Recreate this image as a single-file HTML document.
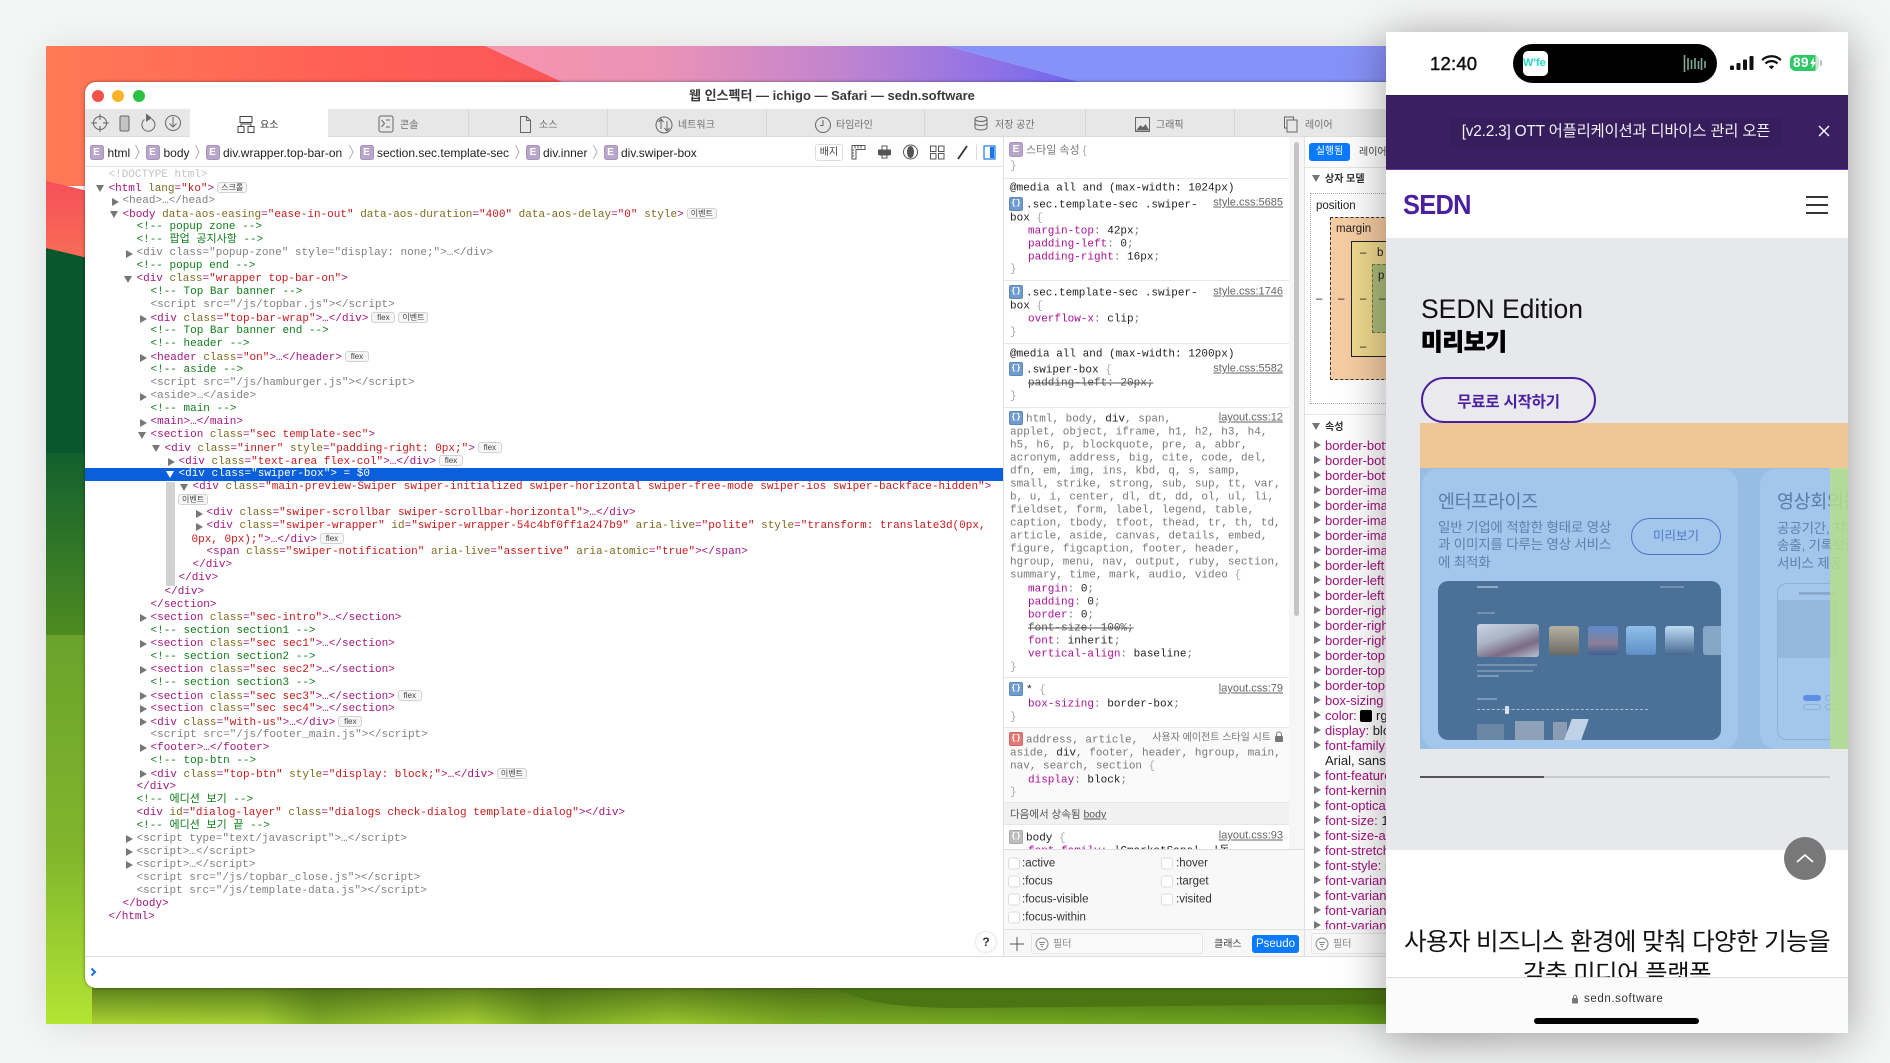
<!DOCTYPE html>
<html lang="ko"><head><meta charset="utf-8"><title>Web Inspector</title>
<style>
*{box-sizing:border-box}
html,body{margin:0;padding:0;width:1890px;height:1063px;overflow:hidden;background:#f4f5f5;font-family:"Liberation Sans","Noto Sans CJK KR",sans-serif}
.abs,.abs>*{position:absolute}
.page{left:0;top:0;width:1890px;height:1063px}
.win{position:absolute;left:85px;top:82px;width:1400px;height:906px;background:#fff;border-radius:11px;box-shadow:0 0 3px rgba(0,0,0,.45)}
.tabbar{position:absolute;left:85px;top:109px;width:1305px;height:28px;background:#e7e7e7;border-bottom:1px solid #dcdcdc}
.sep{position:absolute;top:109px;width:1px;height:28px;background:#d8d8d8}
.tt{position:absolute;top:119px;font-size:10px;line-height:13px;color:#6e6e6e;white-space:pre}
.crumb{position:absolute;top:147px;font-size:12px;line-height:13px;color:#222;white-space:pre}
.E{position:absolute;width:14px;height:15px;background:#b9a6cb;border:1px solid #a993bd;border-radius:2.5px;color:#fff;font:bold 10px/13px "Liberation Sans",sans-serif;text-align:center}
.hline{position:absolute;height:1px;background:#e6e6e6}
.dom{position:absolute;left:85px;top:169px;width:919px;font:11px/13.03px "Liberation Mono","Noto Sans CJK KR",monospace;color:#a3167f}
.dom>div{position:relative;white-space:pre;height:13.03px}
em{font-style:normal;color:#a3167f}
u{text-decoration:none;color:#7d6a1f}
s{text-decoration:none;color:#c8181a}
.c{color:#0f7d1a}.g,.g em,.g u,.g s{color:#808080}
.g s{color:#6f6f6f}
.i0{padding-left:23.5px}.i1{padding-left:37.5px}.i2{padding-left:51.5px}.i3{padding-left:65.5px}.i4{padding-left:79.5px}.i5{padding-left:93.5px}.i6{padding-left:107.5px}.i7{padding-left:121.5px}
.r::before,.d::before{content:"";position:absolute;width:0;height:0}
.r::before{margin:2.5px 0 0 -10.5px;border-left:7px solid #777;border-top:4px solid transparent;border-bottom:4px solid transparent}
.d::before{margin:3px 0 0 -12.5px;border-top:7px solid #777;border-left:4px solid transparent;border-right:4px solid transparent}
.sel{background:#0b5fdc;color:#fff}.sel.d::before{border-top-color:#fff}
.b{display:inline-block;margin-left:3px;height:11px;min-width:24px;padding:0 3px;border:1px solid #d2d2d2;border-radius:3px;background:#f6f6f6;color:#444;font:8px/9px "Liberation Sans","Noto Sans CJK KR",sans-serif;text-align:center;vertical-align:1px}
.s,.cs{white-space:pre;font:11px/13px "Liberation Mono","Noto Sans CJK KR",monospace;color:#777;transform:translateY(1.5px)}
.s{left:1010px}
.n{color:#aa1094}.k{color:#222}.x{text-decoration:line-through;color:#555}.x .n{color:#555}
.ri{left:1009px;width:14px;height:14px;border-radius:2px;background:#6f9bcf;border:1px solid #5d88bb;color:#fff;font:bold 8px/12px "Liberation Mono",monospace;text-align:center}
.ln{right:607px;font:11px/13px "Liberation Sans",sans-serif;color:#666;text-decoration:underline;white-space:pre;transform:translateY(1.5px)}
.cp{left:1325px;font:13px/15px "Liberation Sans",sans-serif;color:#a1107f;white-space:pre}
.cp::before{content:"";position:absolute;left:-11px;top:2.5px;border-left:7px solid #777;border-top:4.5px solid transparent;border-bottom:4.5px solid transparent}
.cb{width:12px;height:12px;border:1px solid #ddd;border-radius:3px;background:#fff;transform:translateY(1.5px)}
.pl{font:11.5px/14px "Liberation Sans",sans-serif;color:#333;white-space:pre;transform:translateY(1.5px)}
.bm{font:11.5px/14px "Liberation Sans",sans-serif;color:#222;white-space:pre}
.ph{font-family:"Liberation Sans","Noto Sans CJK KR",sans-serif;white-space:pre}
</style></head><body>

<div class="abs page">
<div style="left:46px;top:46px;width:1454px;height:978px;box-shadow:0 2px 34px rgba(0,0,0,.10)"></div>
<svg width="1890" height="1063" viewBox="0 0 1890 1063" style="left:0;top:0">
<defs>
<linearGradient id="w1" x1="46" x2="600" y1="0" y2="0" gradientUnits="userSpaceOnUse"><stop offset="0" stop-color="#ff7a56"/><stop offset=".55" stop-color="#ff5f55"/><stop offset="1" stop-color="#fb5458"/></linearGradient>
<linearGradient id="w2" x1="485" x2="1080" y1="0" y2="0" gradientUnits="userSpaceOnUse"><stop offset="0" stop-color="#f796ae"/><stop offset=".3" stop-color="#ea92b6"/><stop offset=".6" stop-color="#c184cf"/><stop offset=".85" stop-color="#8f72e6"/><stop offset="1" stop-color="#6e68ee"/></linearGradient>
<linearGradient id="w3" x1="0" x2="0" y1="181" y2="259" gradientUnits="userSpaceOnUse"><stop offset="0" stop-color="#f6505a"/><stop offset="1" stop-color="#f96d55"/></linearGradient>
<linearGradient id="w4" x1="0" x2="0" y1="453" y2="640" gradientUnits="userSpaceOnUse"><stop offset="0" stop-color="#12602f"/><stop offset="1" stop-color="#4f8c20"/></linearGradient>
<linearGradient id="w5" x1="0" x2="0" y1="635" y2="1024" gradientUnits="userSpaceOnUse"><stop offset="0" stop-color="#6aa32c"/><stop offset=".55" stop-color="#80b52c"/><stop offset="1" stop-color="#b2e534"/></linearGradient>
<linearGradient id="w6" x1="92" x2="1500" y1="0" y2="0" gradientUnits="userSpaceOnUse"><stop offset="0" stop-color="#a8d232"/><stop offset=".12" stop-color="#a5cf33"/><stop offset=".16" stop-color="#80ad28"/><stop offset=".27" stop-color="#a6cf33"/><stop offset=".32" stop-color="#7aa825"/><stop offset=".41" stop-color="#9ac62e"/><stop offset=".5" stop-color="#7cab24"/><stop offset="1" stop-color="#639e1a"/></linearGradient>
<linearGradient id="w7" x1="0" x2="0" y1="988" y2="1024" gradientUnits="userSpaceOnUse"><stop offset="0" stop-color="#24420a" stop-opacity=".55"/><stop offset="1" stop-color="#24420a" stop-opacity="0"/></linearGradient>
</defs>
<rect x="46" y="46" width="560" height="140" fill="url(#w1)"/>
<polygon points="485,46 947,46 1080,82 562,82" fill="url(#w2)"/>
<polygon points="947,46 1500,46 1500,82 1080,82" fill="#8792f8"/>
<polygon points="46,181 92,192 92,262 46,248" fill="url(#w3)"/>
<polygon points="46,248 92,259 92,460 46,453" fill="#0a562d"/>
<rect x="46" y="453" width="46" height="184" fill="url(#w4)"/>
<rect x="46" y="635" width="46" height="389" fill="url(#w5)"/>
<rect x="92" y="985" width="1408" height="39" fill="url(#w6)"/>
<rect x="92" y="985" width="1408" height="39" fill="url(#w7)"/>
<path d="M830,985C860,1003 900,1008 960,1008L1500,1003V985Z" fill="#4a7512"/>
</svg>
</div>

<div class="win"></div>

<div class="abs page">
<div style="left:92px;top:90px;width:12px;height:12px;border-radius:50%;background:#f4504b"></div>
<div style="left:112px;top:90px;width:12px;height:12px;border-radius:50%;background:#fbb428"></div>
<div style="left:133px;top:90px;width:12px;height:12px;border-radius:50%;background:#29c13f"></div>
<div style="left:689px;top:88px;width:285px;text-align:center;font-size:13px;line-height:16px;font-weight:bold;color:#3a3a3a;white-space:pre">웹 인스펙터 — ichigo — Safari — sedn.software</div>
</div>

<div class="tabbar"></div>
<div style="position:absolute;left:190px;top:109px;width:138px;height:28px;background:#fff"></div>
<div class="sep" style="left:468px"></div><div class="sep" style="left:607px"></div><div class="sep" style="left:766px"></div><div class="sep" style="left:924px"></div><div class="sep" style="left:1085px"></div><div class="sep" style="left:1234px"></div>

<svg width="1890" height="170" viewBox="0 0 1890 170" style="position:absolute;left:0;top:0" fill="none" stroke="#666" stroke-width="1">
<circle cx="100" cy="123" r="6.5"/><path d="M100 114v6M100 126v6M91 123h6M103 123h6"/>
<rect x="120" y="116" width="9" height="15" rx="1.5" fill="#c4c4c4"/>
<path d="M151.5 119a6.5 6.5 0 1 1-7 .5"/><path d="M146.5 114.5l4.500 3.500-4.500 3z" fill="#666"/>
<circle cx="173" cy="123" r="7.5"/><path d="M173 117v10M169.500 123.500l3.500 3.500 3.500-3.500"/>
<g transform="translate(0 1)">
<g stroke="#444"><rect x="240" y="115.500" width="12" height="6"/><rect x="238" y="125.500" width="6" height="6"/><rect x="248" y="125.500" width="6" height="6"/><path d="M241 125v-2h10v2"/></g>
<rect x="379" y="115" width="14" height="16" rx="2"/><path d="M381.500 119l3 3.500-3 3.500M386 119h4M386 126h4"/>
<path d="M520.500 115.500h6l4 4v12h-10zM526.500 115.500v4h4"/>
<circle cx="664" cy="124" r="8"/><path d="M661 118v10M658.500 121l2.500-3 2.500 3M667 120v10M664.500 127l2.500 3 2.500-3"/>
<circle cx="823" cy="124" r="7.500"/><path d="M823 119v5.500h-3"/>
<g><ellipse cx="981" cy="118" rx="6" ry="2.500"/><path d="M975 118v4c0 1.500 2.700 2.500 6 2.500s6-1 6-2.500v-4M975 122.500v4c0 1.500 2.700 2.500 6 2.500s6-1 6-2.500v-4"/></g>
<rect x="1135.500" y="116.500" width="14" height="14"/><path d="M1137 129l3.500-4 2.500 2 2.500-3 3 5z" fill="#666"/>
<rect x="1284.500" y="116" width="9" height="11"/><rect x="1287" y="119" width="10" height="12" fill="#e7e7e7"/>
</g>
<g stroke="#555"><path d="M852 145.500h13v4h-9v9.500h-4zM855 145.500v3M858 145.500v3M861 145.500v3M852 150h2M852 153h2M852 156h2"/>
<rect x="880" y="150" width="9" height="5"/><path d="M882 150v-4h5v4M882 155v3h5v-3" /><rect x="878.500" y="150" width="12" height="4.500" fill="#555"/>
<circle cx="910.500" cy="152" r="7"/><ellipse cx="910.500" cy="152" rx="3" ry="5.500" fill="#555"/>
<rect x="930.500" y="146" width="5.500" height="5.500"/><rect x="938.500" y="146" width="5.500" height="5.500"/><rect x="930.500" y="153.500" width="5.500" height="5.500"/><rect x="938.500" y="153.500" width="5.500" height="5.500"/></g>
<path d="M958 159l9-13" stroke="#333" stroke-width="1.800"/>
<path d="M976.500 144v16" stroke="#ddd"/>
<rect x="984" y="146" width="11" height="13" stroke="#1a76e8" stroke-width="1.200"/><rect x="990" y="147" width="4" height="11" fill="#1a76e8" stroke="none"/>
<g stroke="#aaa" stroke-width=".9"><path d="M135.500 145l3.500 7-3.500 7M195.500 145l3.500 7-3.500 7M349.500 145l3.500 7-3.500 7M515.500 145l3.500 7-3.500 7M593.500 145l3.500 7-3.500 7"/></g>
</svg>

<div class="tt" style="left:260px;color:#333">요소</div>
<div class="tt" style="left:400px">콘솔</div>
<div class="tt" style="left:539px">소스</div>
<div class="tt" style="left:678px">네트워크</div>
<div class="tt" style="left:836px">타임라인</div>
<div class="tt" style="left:995px">저장 공간</div>
<div class="tt" style="left:1156px">그래픽</div>
<div class="tt" style="left:1305px">레이어</div>

<div class="E" style="left:89.500px;top:145px">E</div><div class="crumb" style="left:107.500px">html</div>
<div class="E" style="left:145.500px;top:145px">E</div><div class="crumb" style="left:163.500px">body</div>
<div class="E" style="left:205.500px;top:145px">E</div><div class="crumb" style="left:223px">div.wrapper.top-bar-on</div>
<div class="E" style="left:359.500px;top:145px">E</div><div class="crumb" style="left:377px">section.sec.template-sec</div>
<div class="E" style="left:526px;top:145px">E</div><div class="crumb" style="left:543px">div.inner</div>
<div class="E" style="left:603.500px;top:145px">E</div><div class="crumb" style="left:621px">div.swiper-box</div>
<div style="position:absolute;left:815px;top:144px;width:28px;height:17px;border:1px solid #ddd;border-radius:3px;font-size:10px;line-height:15px;text-align:center;color:#444;background:#fff">배지</div>
<div class="hline" style="left:85px;top:166px;width:919px;background:#e4e4e4"></div>

<div class="dom">
<div class="i0" style="color:#c4c4c4">&lt;!DOCTYPE html&gt;</div>
<div class="i0 d">&lt;html <u>lang</u>=<s>"ko"</s>&gt;<span class="b">스크롤</span></div>
<div class="i1 r g">&lt;head&gt;…&lt;/head&gt;</div>
<div class="i1 d">&lt;body <u>data-aos-easing</u>=<s>"ease-in-out"</s> <u>data-aos-duration</u>=<s>"400"</s> <u>data-aos-delay</u>=<s>"0"</s> <u>style</u>&gt;<span class="b">이벤트</span></div>
<div class="i2 c">&lt;!-- popup zone --&gt;</div>
<div class="i2 c">&lt;!-- 팝업 공지사항 --&gt;</div>
<div class="i2 r g">&lt;div class="popup-zone" style="display: none;"&gt;…&lt;/div&gt;</div>
<div class="i2 c">&lt;!-- popup end --&gt;</div>
<div class="i2 d">&lt;div <u>class</u>=<s>"wrapper top-bar-on"</s>&gt;</div>
<div class="i3 c">&lt;!-- Top Bar banner --&gt;</div>
<div class="i3 g">&lt;script src="/js/topbar.js"&gt;&lt;/script&gt;</div>
<div class="i3 r">&lt;div <u>class</u>=<s>"top-bar-wrap"</s>&gt;…&lt;/div&gt;<span class="b">flex</span><span class="b">이벤트</span></div>
<div class="i3 c">&lt;!-- Top Bar banner end --&gt;</div>
<div class="i3 c">&lt;!-- header --&gt;</div>
<div class="i3 r">&lt;header <u>class</u>=<s>"on"</s>&gt;…&lt;/header&gt;<span class="b">flex</span></div>
<div class="i3 c">&lt;!-- aside --&gt;</div>
<div class="i3 g">&lt;script src="/js/hamburger.js"&gt;&lt;/script&gt;</div>
<div class="i3 r g">&lt;aside&gt;…&lt;/aside&gt;</div>
<div class="i3 c">&lt;!-- main --&gt;</div>
<div class="i3 r">&lt;main&gt;…&lt;/main&gt;</div>
<div class="i3 d">&lt;section <u>class</u>=<s>"sec template-sec"</s>&gt;</div>
<div class="i4 d">&lt;div <u>class</u>=<s>"inner"</s> <u>style</u>=<s>"padding-right: 0px;"</s>&gt;<span class="b">flex</span></div>
<div class="i5 r">&lt;div <u>class</u>=<s>"text-area flex-col"</s>&gt;…&lt;/div&gt;<span class="b">flex</span></div>
<div class="i5 d sel">&lt;div class="swiper-box"&gt; = $0</div>
<div class="i6 d">&lt;div <u>class</u>=<s>"main-preview-Swiper swiper-initialized swiper-horizontal swiper-free-mode swiper-ios swiper-backface-hidden"</s>&gt;</div>
<div style="padding-left:93px"><span class="b" style="margin-left:0;min-width:26px">이벤트</span></div>
<div class="i7 r">&lt;div <u>class</u>=<s>"swiper-scrollbar swiper-scrollbar-horizontal"</s>&gt;…&lt;/div&gt;</div>
<div class="i7 r">&lt;div <u>class</u>=<s>"swiper-wrapper"</s> <u>id</u>=<s>"swiper-wrapper-54c4bf0ff1a247b9"</s> <u>aria-live</u>=<s>"polite"</s> <u>style</u>=<s>"transform: translate3d(0px,</s></div>
<div style="padding-left:106.500px"><s>0px, 0px);"</s>&gt;…&lt;/div&gt;<span class="b">flex</span></div>
<div class="i7">&lt;span <u>class</u>=<s>"swiper-notification"</s> <u>aria-live</u>=<s>"assertive"</s> <u>aria-atomic</u>=<s>"true"</s>&gt;&lt;/span&gt;</div>
<div class="i6">&lt;/div&gt;</div>
<div class="i5">&lt;/div&gt;</div>
<div class="i4">&lt;/div&gt;</div>
<div class="i3">&lt;/section&gt;</div>
<div class="i3 r">&lt;section <u>class</u>=<s>"sec-intro"</s>&gt;…&lt;/section&gt;</div>
<div class="i3 c">&lt;!-- section section1 --&gt;</div>
<div class="i3 r">&lt;section <u>class</u>=<s>"sec sec1"</s>&gt;…&lt;/section&gt;</div>
<div class="i3 c">&lt;!-- section section2 --&gt;</div>
<div class="i3 r">&lt;section <u>class</u>=<s>"sec sec2"</s>&gt;…&lt;/section&gt;</div>
<div class="i3 c">&lt;!-- section section3 --&gt;</div>
<div class="i3 r">&lt;section <u>class</u>=<s>"sec sec3"</s>&gt;…&lt;/section&gt;<span class="b">flex</span></div>
<div class="i3 r">&lt;section <u>class</u>=<s>"sec sec4"</s>&gt;…&lt;/section&gt;</div>
<div class="i3 r">&lt;div <u>class</u>=<s>"with-us"</s>&gt;…&lt;/div&gt;<span class="b">flex</span></div>
<div class="i3 g">&lt;script src="/js/footer_main.js"&gt;&lt;/script&gt;</div>
<div class="i3 r">&lt;footer&gt;…&lt;/footer&gt;</div>
<div class="i3 c">&lt;!-- top-btn --&gt;</div>
<div class="i3 r">&lt;div <u>class</u>=<s>"top-btn"</s> <u>style</u>=<s>"display: block;"</s>&gt;…&lt;/div&gt;<span class="b">이벤트</span></div>
<div class="i2">&lt;/div&gt;</div>
<div class="i2 c">&lt;!-- 에디션 보기 --&gt;</div>
<div class="i2">&lt;div <u>id</u>=<s>"dialog-layer"</s> <u>class</u>=<s>"dialogs check-dialog template-dialog"</s>&gt;&lt;/div&gt;</div>
<div class="i2 c">&lt;!-- 에디션 보기 끝 --&gt;</div>
<div class="i2 r g">&lt;script type="text/javascript"&gt;…&lt;/script&gt;</div>
<div class="i2 r g">&lt;script&gt;…&lt;/script&gt;</div>
<div class="i2 r g">&lt;script&gt;…&lt;/script&gt;</div>
<div class="i2 g">&lt;script src="/js/topbar_close.js"&gt;&lt;/script&gt;</div>
<div class="i2 g">&lt;script src="/js/template-data.js"&gt;&lt;/script&gt;</div>
<div class="i1">&lt;/body&gt;</div>
<div class="i0">&lt;/html&gt;</div>
</div>
<div style="position:absolute;left:166px;top:482px;width:9px;height:104px;background:#d2d2d2"></div>

<div style="position:absolute;left:1003px;top:137px;width:1px;height:820px;background:#e0e0e0"></div>
<div style="position:absolute;left:1289px;top:137px;width:15px;height:712px;background:#f6f6f6"></div>
<div style="position:absolute;left:1304px;top:137px;width:1px;height:820px;background:#e0e0e0"></div>
<div style="position:absolute;left:1294px;top:142px;width:5px;height:474px;border-radius:3px;background:#c4c4c4"></div>

<div class="abs page" style="clip-path:inset(137px 601px 214px 1004px)">
<div style="left:1004px;top:727px;width:285px;height:75px;background:#fafafa"></div>
<div style="left:1004px;top:802px;width:285px;height:22px;background:#f1f1f1"></div>
<div class="hline" style="left:1004px;top:178px;width:285px"></div>
<div class="hline" style="left:1004px;top:280px;width:285px"></div>
<div class="hline" style="left:1004px;top:343px;width:285px"></div>
<div class="hline" style="left:1004px;top:407px;width:285px"></div>
<div class="hline" style="left:1004px;top:677px;width:285px"></div>
<div class="hline" style="left:1004px;top:727px;width:285px"></div>
<div class="hline" style="left:1004px;top:802px;width:285px"></div>
<div class="hline" style="left:1004px;top:824px;width:285px"></div>

<div class="E" style="left:1009px;top:142px">E</div>
<div class="s" style="left:1026px;top:143px;font:11px/13px 'Liberation Sans','Noto Sans CJK KR',sans-serif">스타일 속성 <span style="color:#aaa">{</span></div>
<div class="s" style="top:159px;color:#aaa">}</div>

<div class="s k" style="top:180.500px">@media all and (max-width: 1024px)</div>
<div class="ri" style="top:197px">{}</div>
<div class="s k" style="left:1026px;top:197.500px">.sec.template-sec .swiper-</div>
<div class="ln" style="top:195px">style.css:5685</div>
<div class="s k" style="top:210.500px">box <span style="color:#aaa">{</span></div>
<div class="s" style="left:1028px;top:223.500px"><span class="n">margin-top</span>: <span class="k">42px</span>;</div>
<div class="s" style="left:1028px;top:236.500px"><span class="n">padding-left</span>: <span class="k">0</span>;</div>
<div class="s" style="left:1028px;top:249.500px"><span class="n">padding-right</span>: <span class="k">16px</span>;</div>
<div class="s" style="top:262px;color:#aaa">}</div>

<div class="ri" style="top:285px">{}</div>
<div class="s k" style="left:1026px;top:285.500px">.sec.template-sec .swiper-</div>
<div class="ln" style="top:284px">style.css:1746</div>
<div class="s k" style="top:299px">box <span style="color:#aaa">{</span></div>
<div class="s" style="left:1028px;top:312px"><span class="n">overflow-x</span>: <span class="k">clip</span>;</div>
<div class="s" style="top:325px;color:#aaa">}</div>

<div class="s k" style="top:346.500px">@media all and (max-width: 1200px)</div>
<div class="ri" style="top:362px">{}</div>
<div class="s k" style="left:1026px;top:362.500px">.swiper-box <span style="color:#aaa">{</span></div>
<div class="ln" style="top:361px">style.css:5582</div>
<div class="s x" style="left:1028px;top:375.500px">padding-left: 20px;</div>
<div class="s" style="top:388.500px;color:#aaa">}</div>

<div class="ri" style="top:411px">{}</div>
<div class="s" style="left:1026px;top:412px">html, body, <span class="k">div</span>, span,</div>
<div class="ln" style="top:410px">layout.css:12</div>
<div class="s" style="top:425px">applet, object, iframe, h1, h2, h3, h4,</div>
<div class="s" style="top:438px">h5, h6, p, blockquote, pre, a, abbr,</div>
<div class="s" style="top:451px">acronym, address, big, cite, code, del,</div>
<div class="s" style="top:464px">dfn, em, img, ins, kbd, q, s, samp,</div>
<div class="s" style="top:477px">small, strike, strong, sub, sup, tt, var,</div>
<div class="s" style="top:490px">b, u, i, center, dl, dt, dd, ol, ul, li,</div>
<div class="s" style="top:503px">fieldset, form, label, legend, table,</div>
<div class="s" style="top:516px">caption, tbody, tfoot, thead, tr, th, td,</div>
<div class="s" style="top:529px">article, aside, canvas, details, embed,</div>
<div class="s" style="top:542px">figure, figcaption, footer, header,</div>
<div class="s" style="top:555px">hgroup, menu, nav, output, ruby, section,</div>
<div class="s" style="top:568px">summary, time, mark, audio, video <span style="color:#aaa">{</span></div>
<div class="s" style="left:1028px;top:581.500px"><span class="n">margin</span>: <span class="k">0</span>;</div>
<div class="s" style="left:1028px;top:594.500px"><span class="n">padding</span>: <span class="k">0</span>;</div>
<div class="s" style="left:1028px;top:607.500px"><span class="n">border</span>: <span class="k">0</span>;</div>
<div class="s x" style="left:1028px;top:620.500px">font-size: 100%;</div>
<div class="s" style="left:1028px;top:633.500px"><span class="n">font</span>: <span class="k">inherit</span>;</div>
<div class="s" style="left:1028px;top:646.500px"><span class="n">vertical-align</span>: <span class="k">baseline</span>;</div>
<div class="s" style="top:659.500px;color:#aaa">}</div>

<div class="ri" style="top:682px">{}</div>
<div class="s k" style="left:1026px;top:683px">* <span style="color:#aaa">{</span></div>
<div class="ln" style="top:681px">layout.css:79</div>
<div class="s" style="left:1028px;top:696.500px"><span class="n">box-sizing</span>: <span class="k">border-box</span>;</div>
<div class="s" style="top:709.500px;color:#aaa">}</div>

<div class="ri" style="top:732px;background:#e37a75;border-color:#cf6762">{}</div>
<div class="s" style="left:1026px;top:732.500px">address, article,</div>
<div class="ln" style="top:730px;right:619px;text-decoration:none;font-size:10px;font-family:'Liberation Sans','Noto Sans CJK KR',sans-serif;color:#777">사용자 에이전트 스타일 시트</div>
<svg width="10" height="11" viewBox="0 0 10 11" style="left:1274px;top:731px"><rect x="1" y="5" width="8" height="6" rx="1" fill="#777"/><path d="M2.500 5V3.500a2.500 2.500 0 0 1 5 0V5" fill="none" stroke="#777"/></svg>
<div class="s" style="top:745.500px">aside, <span class="k">div</span>, footer, header, hgroup, main,</div>
<div class="s" style="top:759px">nav, search, section <span style="color:#aaa">{</span></div>
<div class="s" style="left:1028px;top:772.500px"><span class="n">display</span>: <span class="k">block</span>;</div>
<div class="s" style="top:784.500px;color:#aaa">}</div>

<div class="s" style="top:807px;font:10.500px/13px 'Liberation Sans','Noto Sans CJK KR',sans-serif;color:#555">다음에서 상속됨 <span style="text-decoration:underline">body</span></div>
<div class="ri" style="top:830px;background:#bdbdbd;border-color:#aaa">{}</div>
<div class="s k" style="left:1026px;top:830.500px">body <span style="color:#aaa">{</span></div>
<div class="ln" style="top:828px">layout.css:93</div>
<div class="s" style="left:1028px;top:844px"><span class="n">font-family</span>: <span class="k">'GmarketSans', '돋</span></div>
</div>

<div style="position:absolute;left:1004px;top:849px;width:300px;height:80px;background:#f8f8f8;border-top:1px solid #dedede"></div>
<div class="abs page" style="pointer-events:none">
<div class="cb" style="left:1008px;top:856px"></div><div class="pl" style="left:1022px;top:855px">:active</div>
<div class="cb" style="left:1008px;top:874px"></div><div class="pl" style="left:1022px;top:873px">:focus</div>
<div class="cb" style="left:1008px;top:892px"></div><div class="pl" style="left:1022px;top:891px">:focus-visible</div>
<div class="cb" style="left:1008px;top:910px"></div><div class="pl" style="left:1022px;top:909px">:focus-within</div>
<div class="cb" style="left:1161px;top:856px"></div><div class="pl" style="left:1176px;top:855px">:hover</div>
<div class="cb" style="left:1161px;top:874px"></div><div class="pl" style="left:1176px;top:873px">:target</div>
<div class="cb" style="left:1161px;top:892px"></div><div class="pl" style="left:1176px;top:891px">:visited</div>
</div>

<div style="position:absolute;left:1004px;top:929px;width:400px;height:28px;background:#f7f7f7;border-top:1px solid #e2e2e2;border-bottom:1px solid #dedede"></div>
<div style="position:absolute;left:85px;top:956px;width:919px;height:1px;background:#dedede"></div>
<div style="position:absolute;left:1304px;top:929px;width:1px;height:28px;background:#e0e0e0"></div>
<div class="abs page">
<div style="left:976px;top:932px;width:20px;height:20px;border-radius:50%;background:#fff;box-shadow:0 0 2px rgba(0,0,0,.25);font-size:12px;line-height:20px;font-weight:bold;text-align:center;color:#333">?</div>
<svg width="14" height="14" viewBox="0 0 14 14" style="left:1010px;top:937px"><path d="M7 0v14M0 7h14" stroke="#555" fill="none"/></svg>
<div style="left:1031px;top:933px;width:172px;height:21px;border:1px solid #e4e4e4;border-radius:3px;background:#f9f9f9"></div>
<svg width="14" height="14" viewBox="0 0 14 14" style="left:1035px;top:936.500px"><circle cx="7" cy="7" r="6" fill="none" stroke="#888"/><path d="M4 5.500h6M5 7.500h4M6 9.500h2" stroke="#888" fill="none"/></svg>
<div style="left:1053px;top:938px;font-size:10px;line-height:13px;color:#888">필터</div>
<div style="left:1214px;top:938px;font-size:10px;line-height:13px;color:#444">클래스</div>
<div style="left:1252px;top:935px;width:47px;height:18px;background:#0a7aff;border-radius:3px;color:#fff;font-size:11.500px;line-height:18px;text-align:center">Pseudo</div>
<div style="left:1311px;top:933px;width:80px;height:21px;border:1px solid #e4e4e4;border-radius:3px;background:#f9f9f9"></div>
<svg width="14" height="14" viewBox="0 0 14 14" style="left:1315px;top:936.500px"><circle cx="7" cy="7" r="6" fill="none" stroke="#888"/><path d="M4 5.500h6M5 7.500h4M6 9.500h2" stroke="#888" fill="none"/></svg>
<div style="left:1333px;top:938px;font-size:10px;line-height:13px;color:#888">필터</div>
<svg width="10" height="10" viewBox="0 0 10 10" style="left:90px;top:967px"><path d="M1.500 1.500l3.500 3.500-3.500 3.500" stroke="#1a6fe0" stroke-width="2" fill="none"/></svg>
</div>

<div class="abs page" style="clip-path:inset(137px 504px 134px 1305px)">
<div style="left:1309px;top:143px;width:41px;height:18px;background:#0a7aff;border-radius:3px;color:#fff;font-size:10px;line-height:18px;text-align:center">실행됨</div>
<div style="left:1359px;top:146px;font-size:10px;line-height:13px;color:#444">레이어</div>
<div class="hline" style="left:1305px;top:167px;width:90px"></div>
<div style="left:1312px;top:175px;border-top:7px solid #777;border-left:4px solid transparent;border-right:4px solid transparent"></div>
<div style="left:1325px;top:173px;font-size:10px;line-height:13px;font-weight:bold;color:#333">상자 모델</div>
<div style="left:1310px;top:193px;width:100px;height:211px;background:#fff;border:1px dotted #aaa"></div>
<div class="bm" style="left:1316px;top:199px">position</div>
<div style="left:1330px;top:217px;width:80px;height:163px;background:#f6cda3;border:1px dashed #333"></div>
<div class="bm" style="left:1336px;top:222px">margin</div>
<div style="left:1351px;top:241px;width:60px;height:116px;background:#f0d98f;border:1px solid #222"></div>
<div class="bm" style="left:1360px;top:246px">–</div><div class="bm" style="left:1377px;top:246px">b</div>
<div style="left:1372px;top:264px;width:40px;height:69px;background:#b0bd7c;border:1px dashed #6a7a40"></div>
<div class="bm" style="left:1378px;top:269px">p</div>
<div class="bm" style="left:1316px;top:292px">–</div><div class="bm" style="left:1338px;top:292px">–</div><div class="bm" style="left:1360px;top:292px">–</div><div class="bm" style="left:1379px;top:292px">–</div>
<div class="bm" style="left:1360px;top:340px">–</div>
<div class="hline" style="left:1305px;top:414px;width:90px"></div>
<div style="left:1312px;top:423px;border-top:7px solid #777;border-left:4px solid transparent;border-right:4px solid transparent"></div>
<div style="left:1325px;top:421px;font-size:10px;line-height:13px;font-weight:bold;color:#333">속성</div>
<div class="cp" style="top:438px">border-bottom</div>
<div class="cp" style="top:453px">border-bottom</div>
<div class="cp" style="top:468px">border-bottom</div>
<div class="cp" style="top:483px">border-image</div>
<div class="cp" style="top:498px">border-image</div>
<div class="cp" style="top:513px">border-image</div>
<div class="cp" style="top:528px">border-image</div>
<div class="cp" style="top:543px">border-image</div>
<div class="cp" style="top:558px">border-left</div>
<div class="cp" style="top:573px">border-left</div>
<div class="cp" style="top:588px">border-left</div>
<div class="cp" style="top:603px">border-right</div>
<div class="cp" style="top:618px">border-right</div>
<div class="cp" style="top:633px">border-right</div>
<div class="cp" style="top:648px">border-top</div>
<div class="cp" style="top:663px">border-top</div>
<div class="cp" style="top:678px">border-top</div>
<div class="cp" style="top:693px">box-sizing</div>
<div class="cp" style="top:708px">color: <span style="display:inline-block;width:12px;height:12px;background:#000;border-radius:2px;vertical-align:-2px"></span> <span style="color:#222">rgb</span></div>
<div class="cp" style="top:723px">display: <span style="color:#222">block</span></div>
<div class="cp" style="top:738px">font-family</div>
<div class="bm" style="left:1325px;top:753px;font-size:13px;line-height:15px">Arial, sans-serif</div>
<div class="cp" style="top:768px">font-feature</div>
<div class="cp" style="top:783px">font-kerning</div>
<div class="cp" style="top:798px">font-optical</div>
<div class="cp" style="top:813px">font-size: <span style="color:#222">16</span></div>
<div class="cp" style="top:828px">font-size-adjust</div>
<div class="cp" style="top:843px">font-stretch</div>
<div class="cp" style="top:858px">font-style: <span style="color:#222">n</span></div>
<div class="cp" style="top:873px">font-variant</div>
<div class="cp" style="top:888px">font-variant</div>
<div class="cp" style="top:903px">font-variant</div>
<div class="cp" style="top:918px">font-variant</div>
</div>

<div style="position:absolute;left:1386px;top:32px;width:462px;height:1001px;background:#fff;box-shadow:0 6px 44px rgba(0,0,0,.36)"></div>
<div class="abs page ph" style="clip-path:inset(32px 42px 30px 1386px)">
<div style="left:1430px;top:52px;font-size:18.500px;line-height:24px;color:#111;letter-spacing:.2px;-webkit-text-stroke:.5px #111">12:40</div>
<div style="left:1513px;top:44px;width:204px;height:39px;border-radius:20px;background:#000"></div>
<div style="left:1523px;top:51px;width:25px;height:25px;border-radius:5px;background:#fff;overflow:hidden;color:#22d8cc;font-size:11px;font-weight:bold;line-height:25px;white-space:pre">W'fe</div>
<svg width="24" height="20" viewBox="0 0 24 20" style="left:1683px;top:54px" stroke="#7fa89e" stroke-width="1.600"><path d="M1.500 1v17M5 4v12M8.500 6v9M12 4v11M15.500 7v8M18.500 4v12M22 7v7"/></svg>
<svg width="24" height="15" viewBox="0 0 24 15" style="left:1730px;top:56px"><rect x="0" y="9.500" width="4" height="4.500" rx="1" fill="#111"/><rect x="6.500" y="7" width="4" height="7" rx="1" fill="#111"/><rect x="13" y="3.500" width="4" height="10.500" rx="1" fill="#111"/><rect x="19.500" y="0" width="4" height="14" rx="1" fill="#111"/></svg>
<svg width="21" height="15" viewBox="0 0 21 15" style="left:1761px;top:55px" fill="none" stroke="#111" stroke-width="2.300"><path d="M1.200 5a13.500 13.500 0 0 1 18.600 0M4.500 8.500a8.700 8.700 0 0 1 12 0"/><path d="M7.800 11.500l2.700 2.800 2.700-2.800a4 4 0 0 0-5.400 0z" fill="#111" stroke="none"/></svg>
<div style="left:1790px;top:55px;width:29px;height:16px;border-radius:5px;background:linear-gradient(90deg,#2fc866 0 88%,#cfe8d6 88%);color:#fff;font-size:13.500px;line-height:16px;font-weight:bold;padding-left:3px;letter-spacing:.5px">89</div>
<svg width="8" height="12" viewBox="0 0 8 12" style="left:1809px;top:57px"><path d="M5 0L1 7h2.500L2.500 12 7 5H4.500z" fill="#fff"/></svg>
<div style="left:1820px;top:60px;width:2px;height:6px;border-radius:0 2px 2px 0;background:#bbb"></div>

<div style="left:1386px;top:95px;width:462px;height:75px;background:#3a1f63;border-top:1px solid #2e1a55;border-bottom:1px solid #6a3aa5"></div>
<div style="left:1450px;top:118px;width:332px;height:29px;background:#361e5c;border-radius:4px"></div>
<div style="left:1452px;top:122px;width:328px;text-align:center;font-size:15.400px;line-height:20px;color:#f2f2f6;letter-spacing:-.2px">[v2.2.3] OTT 어플리케이션과 디바이스 관리 오픈</div>
<svg width="12" height="12" viewBox="0 0 12 12" style="left:1818px;top:125px"><path d="M1 1l10 10M11 1L1 11" stroke="#fff" stroke-width="1.400"/></svg>

<div style="left:1386px;top:170px;width:462px;height:68px;background:#fff"></div>
<div style="left:1403px;top:188px;font-size:27.500px;line-height:34px;font-weight:bold;color:#4a1fa0;letter-spacing:-.8px;transform:scaleX(.925);transform-origin:0 0">SEDN</div>
<div style="left:1806px;top:196px;width:22px;height:1.600px;background:#333"></div>
<div style="left:1806px;top:204px;width:22px;height:1.600px;background:#333"></div>
<div style="left:1806px;top:212px;width:22px;height:1.600px;background:#333"></div>

<div style="left:1386px;top:238px;width:462px;height:612px;background:#e6e8eb"></div>
<div style="left:1421px;top:292px;font-size:26.500px;line-height:34px;color:#111">SEDN Edition</div>
<div style="left:1421px;top:325px;font-size:23.500px;line-height:34px;font-weight:900;color:#000;letter-spacing:-.2px;-webkit-text-stroke:.6px #000">미리보기</div>
<div style="left:1421px;top:377px;width:175px;height:46px;border:2px solid #4a1fa0;border-radius:23px;background:#e9e9ee;text-align:center;font-size:15.500px;line-height:47px;font-weight:bold;color:#4a1fa0;letter-spacing:-.2px">무료로 시작하기</div>

<div style="left:1420px;top:423px;width:428px;height:45px;background:#f0c696"></div>
<div style="left:1420px;top:468px;width:410px;height:281px;background:#98bde4"></div>
<div style="left:1422px;top:469px;width:316px;height:280px;border-radius:16px;background:#a3c6ec"></div>
<div style="left:1760px;top:469px;width:120px;height:280px;border-radius:16px;background:#a3c6ec"></div>

<div style="left:1438px;top:489px;font-size:18.500px;line-height:26px;color:#5a7ca8;letter-spacing:-.4px">엔터프라이즈</div>
<div style="left:1438px;top:519px;font-size:13.500px;line-height:17.400px;color:#5f80aa;letter-spacing:-.2px;white-space:pre">일반 기업에 적합한 형태로 영상
과 이미지를 다루는 영상 서비스
에 최적화</div>
<div style="left:1631px;top:518px;width:90px;height:37px;border:1.500px solid #4d76c4;border-radius:19px;text-align:center;font-size:12.500px;line-height:34px;color:#4f78c4">미리보기</div>

<div style="left:1438px;top:581px;width:283px;height:159px;border-radius:10px;background:#4c7198;overflow:hidden">
  <div style="position:absolute;left:39px;top:5px;width:21px;height:2px;background:#94a9c2"></div>
  <div style="position:absolute;left:222px;top:5px;width:24px;height:2px;background:#7391b0"></div>
  <div style="position:absolute;left:39px;top:31px;width:18px;height:2px;background:#7391b0"></div>
  <div style="position:absolute;left:39px;top:43px;width:62px;height:33px;border-radius:3px;background:linear-gradient(160deg,#c9d6e6 0%,#a9b3c4 40%,#7c6a84 70%,#b7c3d4 100%)"></div>
  <div style="position:absolute;left:111px;top:45px;width:30px;height:29px;border-radius:3px;background:linear-gradient(#b5b1a2,#6b6a62)"></div>
  <div style="position:absolute;left:150px;top:45px;width:30px;height:29px;border-radius:3px;background:linear-gradient(#5f8bcb,#8a7f97 60%,#3c5f92)"></div>
  <div style="position:absolute;left:188px;top:45px;width:30px;height:29px;border-radius:3px;background:linear-gradient(#8fc0ea,#5f8fc6)"></div>
  <div style="position:absolute;left:227px;top:45px;width:29px;height:29px;border-radius:3px;background:linear-gradient(#bcdcf4,#47698f)"></div>
  <div style="position:absolute;left:265px;top:45px;width:18px;height:29px;border-radius:3px 0 0 3px;background:#86a7c6"></div>
  <div style="position:absolute;left:39px;top:83px;width:60px;height:2px;background:#7491b0"></div>
  <div style="position:absolute;left:39px;top:89px;width:56px;height:2px;background:#7491b0"></div>
  <div style="position:absolute;left:39px;top:94px;width:22px;height:2px;background:#7f9ab6"></div>
  <div style="position:absolute;left:39px;top:117px;width:20px;height:2px;background:#7f9ab6"></div>
  <div style="position:absolute;left:39px;top:128px;width:171px;border-top:1.500px dashed #a9bed4"></div>
  <div style="position:absolute;left:67px;top:125px;width:4px;height:8px;border-radius:1px;background:#d8e2ee"></div>
  <div style="position:absolute;left:39px;top:143px;width:27px;height:16px;background:#6a87a6"></div>
  <div style="position:absolute;left:77px;top:140px;width:29px;height:19px;background:#8ea1b6"></div>
  <div style="position:absolute;left:115px;top:141px;width:14px;height:18px;background:#8a9cb2"></div>
  <div style="position:absolute;left:130px;top:138px;width:17px;height:21px;background:#c0d2e6;transform:skewX(-20deg)"></div>
</div>

<div style="left:1777px;top:489px;font-size:18.500px;line-height:26px;color:#5a7ca8;letter-spacing:-.4px">영상회의용</div>
<div style="left:1777px;top:520px;font-size:13.500px;line-height:17.400px;color:#5f80aa;letter-spacing:-.2px;white-space:pre">공공기간, 지자체
송출, 기록보존
서비스 제공</div>
<div style="left:1777px;top:583px;width:90px;height:157px;border:1px solid #8fb0d4;border-radius:10px;background:#a3c6ec"></div>
<div style="left:1778px;top:600px;width:60px;height:58px;background:#94b7dd"></div>
<div style="left:1799px;top:592px;width:38px;height:3px;background:#8aa9cc"></div>
<div style="left:1803px;top:695px;width:18px;height:6px;border-radius:3px;background:#5c8fe0"></div>
<div style="left:1825px;top:695px;width:18px;height:6px;border:1px solid #8fb0d4;border-radius:3px"></div>
<div style="left:1803px;top:704px;width:18px;height:6px;border:1px solid #8fb0d4;border-radius:3px"></div>
<div style="left:1825px;top:704px;width:18px;height:6px;border:1px solid #8fb0d4;border-radius:3px"></div>
<div style="left:1830px;top:468px;width:18px;height:281px;background:rgba(180,222,140,.86)"></div>

<div style="left:1420px;top:776px;width:410px;height:2px;background:#c8cacc"></div>
<div style="left:1420px;top:776px;width:124px;height:2px;background:#555"></div>

<div style="left:1386px;top:850px;width:462px;height:183px;background:#fff"></div>
<div style="left:1784px;top:837px;width:42px;height:43px;border-radius:50%;background:#787878"></div>
<svg width="18" height="10" viewBox="0 0 18 10" style="left:1796px;top:853px"><path d="M1 9l8-7 8 7" fill="none" stroke="#fff" stroke-width="1.700"/></svg>

<div style="left:1386px;top:924px;width:462px;text-align:center;font-size:24.500px;line-height:38px;color:#111;letter-spacing:-.6px">사용자 비즈니스 환경에 맞춰 다양한 기능을</div>
<div style="left:1386px;top:956px;width:462px;text-align:center;font-size:24.500px;line-height:38px;color:#111;letter-spacing:-.6px">갖춘 미디어 플랫폼</div>
<div style="left:1386px;top:977px;width:462px;height:56px;background:#fbfbfc;border-top:1px solid #dcdcdc"></div>
<svg width="8" height="10" viewBox="0 0 8 10" style="left:1571px;top:994px"><rect x="1" y="4" width="6" height="5.500" rx="1" fill="#777"/><path d="M2.300 4V3a1.700 1.700 0 0 1 3.400 0v1" fill="none" stroke="#777"/></svg>
<div style="left:1584px;top:992px;font-size:11.500px;line-height:14px;color:#333;letter-spacing:.6px">sedn.software</div>
<div style="left:1534px;top:1018px;width:165px;height:6px;border-radius:3px;background:#000"></div>
</div>
</body></html>
